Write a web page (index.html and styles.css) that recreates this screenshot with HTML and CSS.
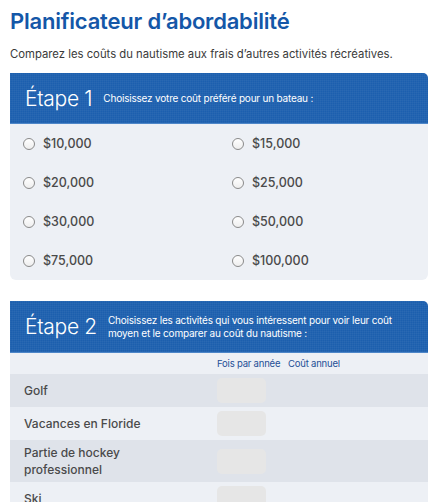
FILE: index.html
```html
<!DOCTYPE html>
<html lang="fr">
<head>
<meta charset="utf-8">
<title>Planificateur d’abordabilité</title>
<link rel="stylesheet" href="styles.css">
</head>
<body>
<div class="page">
  <h1 class="title">Planificateur d’abordabilité</h1>
  <p class="intro">Comparez les coûts du nautisme aux frais d’autres activités récréatives.</p>

  <section class="card">
    <header class="step-head">
      <span class="step-num">Étape 1</span>
      <span class="step-text">Choisissez votre coût préféré pour un bateau :</span>
    </header>
    <div class="options">
      <label class="opt"><span class="radio"></span>$10,000</label>
      <label class="opt"><span class="radio"></span>$15,000</label>
      <label class="opt"><span class="radio"></span>$20,000</label>
      <label class="opt"><span class="radio"></span>$25,000</label>
      <label class="opt"><span class="radio"></span>$30,000</label>
      <label class="opt"><span class="radio"></span>$50,000</label>
      <label class="opt"><span class="radio"></span>$75,000</label>
      <label class="opt"><span class="radio"></span>$100,000</label>
    </div>
  </section>

  <section class="card card-2">
    <header class="step-head">
      <span class="step-num">Étape 2</span>
      <span class="step-text">Choisissez les activités qui vous intéressent pour voir leur coût moyen et le comparer au coût du nautisme :</span>
    </header>
    <div class="row row-head">
      <span></span>
      <span class="col-label">Fois par année</span>
      <span class="col-label">Coût annuel</span>
    </div>
    <div class="row dark">
      <span class="act">Golf</span>
      <span class="field"></span>
      <span></span>
    </div>
    <div class="row">
      <span class="act">Vacances en Floride</span>
      <span class="field"></span>
      <span></span>
    </div>
    <div class="row dark">
      <span class="act">Partie de hockey<br>professionnel</span>
      <span class="field"></span>
      <span></span>
    </div>
    <div class="row">
      <span class="act">Ski</span>
      <span class="field"></span>
      <span></span>
    </div>
  </section>
</div>
</body>
</html>
```

FILE: styles.css
```css
* { box-sizing: border-box; }

html, body {
  margin: 0;
  padding: 0;
  background: #ffffff;
}

body {
  font-family: "Inter", "Open Sans", "Liberation Sans", sans-serif;
  color: #444;
}

.page {
  width: 442px;
  padding: 7px 14px 0 10px;
}

.title {
  margin: 0;
  font-size: 22px;
  line-height: 28px;
  font-weight: 600;
  color: #1457a8;
  letter-spacing: -0.2px;
}

.intro {
  margin: 12px 0 0;
  font-size: 11.3px;
  line-height: 14px;
  color: #3a3a3a;
}

.card {
  margin-top: 12px;
  background: #edf0f5;
  border-radius: 0 5px 6px 6px;
  overflow: hidden;
}

.card-2 {
  margin-top: 21px;
  border-radius: 0 5px 0 0;
}

.step-head {
  display: flex;
  align-items: center;
  gap: 11px;
  min-height: 51px;
  padding: 0 16px 0 15px;
  background-color: #1c5fae;
  background-image: repeating-linear-gradient(0deg, rgba(255,255,255,0.03) 0 1px, transparent 1px 2px),
                    repeating-linear-gradient(90deg, rgba(255,255,255,0.03) 0 1px, transparent 1px 2px);
  color: #ffffff;
  border-bottom: 1px solid #4d86c8;
}

.card-2 .step-head { min-height: 52px; }

.step-num {
  font-size: 21px;
  font-weight: 300;
  white-space: nowrap;
  letter-spacing: -0.3px;
}

.step-text {
  font-size: 10px;
  line-height: 13px;
  letter-spacing: -0.2px;
}

.options {
  display: grid;
  grid-template-columns: 209px 1fr;
  grid-auto-rows: 39px;
  padding: 0 0 0 13px;
}

.opt {
  display: flex;
  align-items: center;
  gap: 8px;
  font-size: 12.5px;
  font-weight: 500;
  color: #4a4a4a;
}

.radio {
  width: 12px;
  height: 12px;
  border-radius: 50%;
  border: 1px solid #8a8a8a;
  background: linear-gradient(#ffffff, #eeeeee);
}

.row {
  display: grid;
  grid-template-columns: 193px 71px 1fr;
  align-items: center;
  padding: 4px 0 4px 14px;
  background: #edf0f5;
}

.row.dark { background: #dfe3ea; }

.row-head {
  padding: 0 0 0 14px;
  height: 21px;
}

.col-label {
  font-size: 9.5px;
  color: #1d4f96;
  white-space: nowrap;
  letter-spacing: -0.2px;
}

.act {
  font-size: 12px;
  line-height: 17px;
  font-weight: 500;
  color: #4a4a4a;
}

.field {
  display: block;
  width: 49px;
  height: 25px;
  border-radius: 5px;
  background: #e6e6e6;
}
```
